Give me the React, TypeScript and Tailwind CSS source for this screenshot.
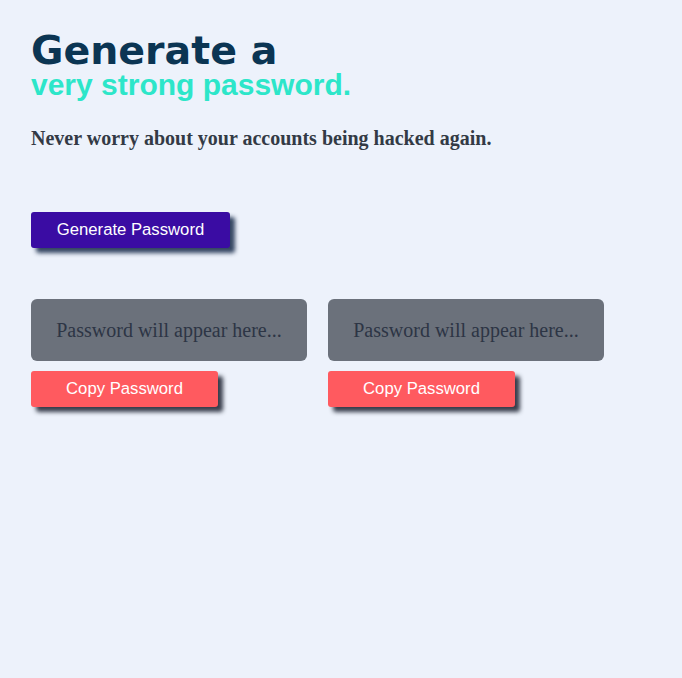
export default function App() {
  return (
    <div className="min-h-screen bg-[#edf2fb] px-[31px] pt-[32px]">
      <h1 className="font-['DejaVu_Sans',sans-serif] text-[39.5px] font-bold leading-[36px] text-[#0b3553]">
        Generate a
      </h1>
      <h2 className="font-['Liberation_Sans',sans-serif] text-[30px] font-bold leading-[34px] text-[#2de6c9]">
        very strong password.
      </h2>
      <p className="mt-[23px] font-['Liberation_Serif',serif] text-[20px] font-bold leading-[26px] text-[#333a45]">
        Never worry about your accounts being hacked again.
      </p>

      <button className="mt-[61px] flex h-[36px] w-[199px] items-center justify-center rounded-[3px] bg-[#3a0ca3] font-['Liberation_Sans',sans-serif] text-[16.7px] text-white shadow-[5px_5px_4px_rgba(20,40,70,0.85)]">
        Generate Password
      </button>

      <div className="mt-[51px] flex gap-[21px]">
        {[0, 1].map((i) => (
          <div key={i} className="flex flex-col gap-[10px]">
            <div className="flex h-[62px] w-[276px] items-center justify-center rounded-[6px] bg-[#6b717b] font-['Liberation_Serif',serif] text-[20px] text-[#2d3545]">
              Password will appear here...
            </div>
            <button className="flex h-[36px] w-[187px] items-center justify-center rounded-[3px] bg-[#ff5a5f] font-['Liberation_Sans',sans-serif] text-[16.7px] text-white shadow-[5px_5px_4px_rgba(25,30,45,0.85)]">
              Copy Password
            </button>
          </div>
        ))}
      </div>
    </div>
  );
}
